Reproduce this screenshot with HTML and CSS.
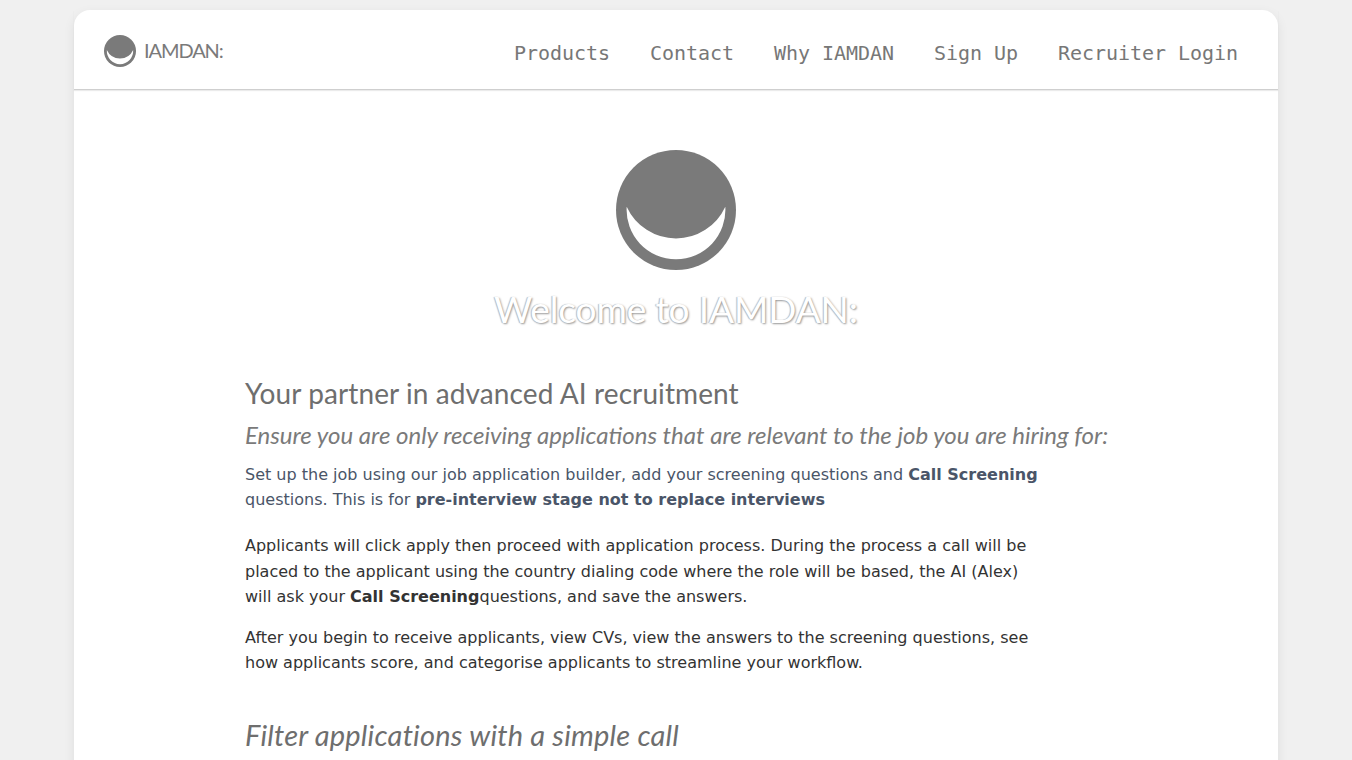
FILE: index.html
```html
<!DOCTYPE html>
<html lang="en">
<head>
<meta charset="utf-8">
<title>IAMDAN:</title>
<link rel="stylesheet" href="styles.css">
</head>
<body>
<div class="card">
  <header class="top">
    <a class="brand" href="#">
      <svg class="brand-mark" viewBox="0 0 120 120"><circle cx="60" cy="60" r="60" fill="#7a7a7a"/><path d="M10.7 56.7A49.4 49.4 0 1 0 109.3 56.7A54.2 54.2 0 0 1 10.7 56.7Z" fill="#fff"/></svg>
      <span class="brand-name">IAMDAN:</span>
    </a>
    <nav class="nav">
      <a href="#">Products</a>
      <a href="#">Contact</a>
      <a href="#">Why IAMDAN</a>
      <a href="#">Sign Up</a>
      <a href="#">Recruiter Login</a>
    </nav>
  </header>
  <main class="main">
    <section class="hero">
      <svg class="hero-mark" viewBox="0 0 120 120"><circle cx="60" cy="60" r="60" fill="#7a7a7a"/><path d="M10.7 56.7A49.4 49.4 0 1 0 109.3 56.7A54.2 54.2 0 0 1 10.7 56.7Z" fill="#fff"/></svg>
      <h1 class="hero-title">Welcome to IAMDAN:</h1>
    </section>
    <section class="content">
      <h2 class="lead">Your partner in advanced AI recruitment</h2>
      <h3 class="sub">Ensure you are only receiving applications that are relevant to the job you are hiring for:</h3>
      <p class="text muted">Set up the job using our job application builder, add your screening questions and <strong>Call Screening</strong> questions. This is for <strong>pre-interview stage not to replace interviews</strong></p>
      <p class="text first">Applicants will click apply then proceed with application process. During the process a call will be placed to the applicant using the country dialing code where the role will be based, the AI (Alex) will ask your <strong>Call Screening</strong>questions, and save the answers.</p>
      <p class="text last">After you begin to receive applicants, view CVs, view the answers to the screening questions, see how applicants score, and categorise applicants to streamline your workflow.</p>
      <h3 class="filter">Filter applications with a simple call</h3>
    </section>
  </main>
</div>
</body>
</html>
```
FILE: styles.css
```css
* { box-sizing: border-box; }
html, body { margin: 0; padding: 0; }
body {
  background: #f0f0f0;
  font-family: "DejaVu Sans", sans-serif;
  padding: 10px 0 40px;
}
a { text-decoration: none; color: inherit; }
.card {
  width: 1204px;
  margin: 0 auto;
  background: #fff;
  border-radius: 16px;
  box-shadow: 0 4px 12px rgba(0, 0, 0, 0.08);
}
.top {
  height: 80px;
  display: flex;
  align-items: center;
  justify-content: space-between;
  padding: 0 40px 0 30px;
  border-bottom: 1px solid #cfcfcf;
  box-shadow: 0 1px 1px rgba(0, 0, 0, 0.08);
}
.brand {
  display: flex;
  align-items: center;
  gap: 8px;
  margin-top: 2px;
}
.brand-mark { width: 32px; height: 32px; display: block; }
.brand-name {
  font-family: Lato, sans-serif;
  font-size: 20px;
  font-weight: 400;
  letter-spacing: -1.1px;
  color: #7a7a7a;
  margin-top: -2px;
}
.nav {
  display: flex;
  gap: 40px;
  font-family: "DejaVu Sans Mono", monospace;
  font-size: 20px;
  letter-spacing: -0.04px;
  line-height: 28px;
  color: #777;
  margin-top: 7px;
}
.main { padding: 60px 171px 40px; }
.hero {
  display: flex;
  flex-direction: column;
  align-items: center;
}
.hero-mark { width: 120px; height: 120px; display: block; }
.hero-title {
  margin: 14px 0 0;
  font-family: Lato, sans-serif;
  font-weight: 400;
  font-size: 37px;
  letter-spacing: -0.1px;
  line-height: 50px;
  color: #fff;
  text-shadow: 1px 1px 2px #999, -1px 0 1px #bbb;
}
.content { margin-top: 41px; }
.lead {
  margin: 0;
  font-family: Lato, sans-serif;
  font-weight: 400;
  font-size: 28px;
  letter-spacing: 0.1px;
  line-height: 36px;
  color: #6e6e6e;
}
.sub {
  margin: 8px 0 0;
  font-family: Lato, sans-serif;
  font-style: italic;
  font-weight: 400;
  font-size: 24px;
  line-height: 32px;
  color: #7a7a7a;
  white-space: nowrap;
}
.text {
  margin: 0;
  max-width: 800px;
  font-size: 16px;
  line-height: 25.5px;
  color: #333;
}
.muted { color: #4a5568; margin-top: 10.6px; }
.first { margin-top: 20.5px; }
.last { margin-top: 15px; }
.filter {
  margin: 41px 0 0;
  font-family: Lato, sans-serif;
  font-style: italic;
  font-weight: 400;
  font-size: 29px;
  letter-spacing: 0.2px;
  line-height: 36px;
  color: #6e6e6e;
}
```
